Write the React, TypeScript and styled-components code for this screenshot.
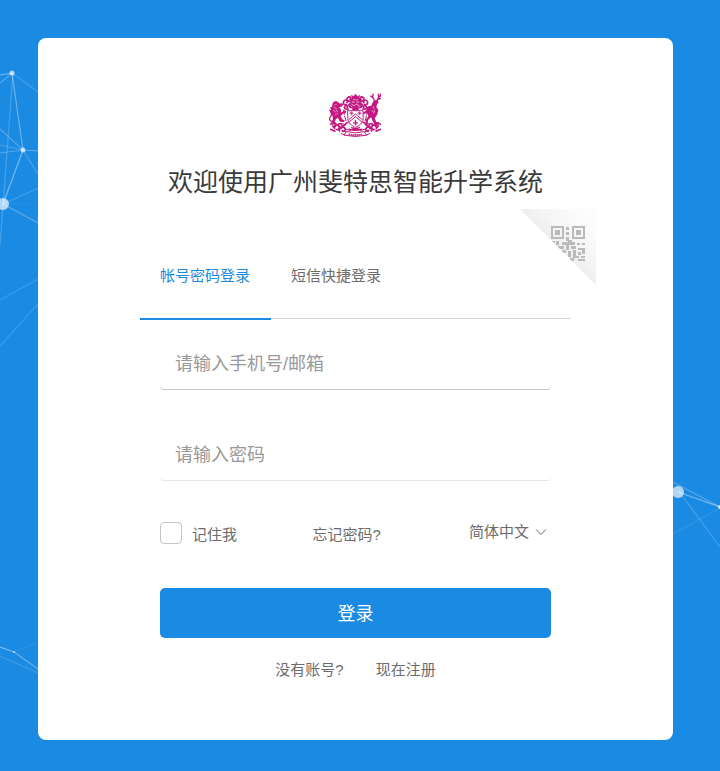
import React, { useState } from "react";
import styled, { createGlobalStyle } from "styled-components";

const BLUE = "#1a8ae3";
const CREST = "#c2187f";

const GlobalStyle = createGlobalStyle`
  *, *::before, *::after { box-sizing: border-box; }
  body {
    margin: 0;
    background: ${BLUE};
    color: #6c6c6c;
    font-family: "Liberation Sans", "Noto Sans CJK SC", sans-serif;
    font-size: 15px;
  }
  button, input, select { font: inherit; color: inherit; }
`;

const Page = styled.div`
  position: relative;
  min-height: 100vh;
  padding: 38px 47px 31px 38px;
  overflow: hidden;
`;

const Network = styled.svg<{ $side: "left" | "right" }>`
  position: absolute;
  top: 0;
  ${(p) => p.$side}: 0;
  stroke: #fff;
  stroke-width: 1.2;
  fill: none;
`;

const Card = styled.main`
  position: relative;
  display: flex;
  flex-direction: column;
  align-items: center;
  padding: 55px 24px 60px;
  background: #fff;
  border-radius: 8px;
`;

const Title = styled.h1`
  margin: 26px 0 9px;
  color: #3a3a3a;
  font-size: 25px;
  font-weight: 400;
  line-height: 36px;
`;

const Panel = styled.form`
  position: relative;
  width: 100%;
  max-width: 481px;
  padding: 24px 25px 0;
`;

const QrToggle = styled.button`
  position: absolute;
  top: 0;
  right: 0;
  display: flex;
  padding: 0;
  border: 0;
  background: none;
  cursor: pointer;
`;

const Tabs = styled.div`
  display: flex;
  height: 86px;
  border-bottom: 1px solid #d8d8d8;
`;

const Tab = styled.button<{ $active: boolean }>`
  height: 87px;
  padding: 0 21px 2px 20px;
  border: 0;
  border-bottom: 2px solid ${(p) => (p.$active ? BLUE : "transparent")};
  background: none;
  color: ${(p) => (p.$active ? BLUE : "#6c6c6c")};
  cursor: pointer;
`;

const Body = styled.div`
  display: flex;
  flex-direction: column;
  padding: 21px 20px 0;
`;

const Fields = styled.div`
  display: grid;
  gap: 41px;
`;

const Field = styled.input<{ $line: string }>`
  width: 100%;
  height: 50px;
  padding: 0 15px;
  border: 0;
  border-bottom: 1px solid ${(p) => p.$line};
  border-radius: 4px;
  outline: 0;
  background: #fff;
  font-size: 18px;
  &::placeholder { color: #999; opacity: 1; }
`;

const Options = styled.div`
  display: flex;
  align-items: center;
  height: 26px;
  margin: 39px 0 42px;
`;

const Remember = styled.label`
  display: flex;
  align-items: center;
  gap: 10px;
  width: 39%;
`;

const Checkbox = styled.input`
  appearance: none;
  width: 22px;
  height: 22px;
  margin: 0;
  border: 1px solid #c4c4c4;
  border-radius: 4px;
  background: #fff;
  &:checked { background: ${BLUE}; border-color: ${BLUE}; }
`;

const TextLink = styled.a`
  color: inherit;
  text-decoration: none;
`;

const Language = styled.label`
  display: flex;
  align-items: center;
  gap: 5px;
  margin-left: auto;
  padding: 0 4px 3px 0;
`;

const LanguageSelect = styled.select`
  appearance: none;
  padding: 0;
  border: 0;
  outline: 0;
  background: none;
`;

const Submit = styled.button`
  height: 50px;
  padding: 0 0 2px;
  border: 0;
  border-radius: 5px;
  background: ${BLUE};
  color: #fff;
  font-size: 18px;
  cursor: pointer;
`;

const Register = styled.p`
  display: flex;
  justify-content: center;
  gap: 32px;
  margin: 22px 0 0;
  line-height: 20px;
`;

type Line = [number, number, number, number, number];
type Dot = [number, number, number, number];

const leftLines: Line[] = [
  [12, 73, 0, 75, 0.4], [12, 73, 0, 83, 0.25], [12, 73, 38, 92, 0.18],
  [12, 73, 23, 150, 0.35], [13, 73, 0, 245, 0.2], [23, 150, 0, 129, 0.25],
  [23, 150, 0, 145, 0.2], [23, 150, 0, 153, 0.25], [23, 150, 38, 151, 0.3],
  [23, 150, 38, 174, 0.2], [23, 150, 3, 204, 0.4], [3, 204, 38, 188, 0.18],
  [3, 204, 38, 203, 0.05], [3, 204, 38, 223, 0.28], [0, 300, 38, 279, 0.14],
  [0, 346, 38, 304, 0.14], [0, 647, 14, 652, 0.4], [14, 652, 38, 669, 0.35],
  [14, 652, 38, 642, 0.08], [0, 656, 38, 673, 0.14],
];
const leftDots: Dot[] = [[12, 73, 2.5, 0.65], [23, 150, 2.5, 0.65], [3, 204, 6, 0.65], [14, 652, 1, 0.6]];

const rightLines: Line[] = [
  [0, 482, 47, 507, 0.25], [5, 492, 47, 507, 0.4],
  [5, 490, 47, 547, 0.18], [0, 534, 47, 508, 0.1],
];
const rightDots: Dot[] = [[5, 492, 6, 0.65], [47, 507, 2, 0.75]];

function Constellation({ side, width, lines, dots }: { side: "left" | "right"; width: number; lines: Line[]; dots: Dot[] }) {
  return (
    <Network $side={side} width={width} height="771" aria-hidden="true">
      {lines.map(([x1, y1, x2, y2, o], i) => (
        <line key={i} x1={x1} y1={y1} x2={x2} y2={y2} strokeOpacity={o} />
      ))}
      {dots.map(([cx, cy, r, o], i) => (
        <circle key={i} cx={cx} cy={cy} r={r} fill="#fff" fillOpacity={o} stroke="none" />
      ))}
    </Network>
  );
}

function Beast() {
  return (
    <g>
      <path d="M36 55c4-7 15-7 19 0l6 3-1 7-6 1c7 5 9 12 7 18l8-5 8 1-2 6-8 1-7 8 5 9 7 3-1 5-13-1-6-11-6 3-4 10 6 3-1 4H32l1-8 4-8-2-12-5-7-3-8 5-2-4-7 6-2z" fill={CREST} stroke="none" />
      <path d="M42 61l5-2M40 68l7 3M38 77l7 5M46 74l5 8M44 90l6-3" stroke="#fff" strokeWidth="1.5" />
      <path d="M34 110c-9-2-9-9-4-15s4-10-2-18M53 66l9-2 4-5M59 60l4-3" strokeWidth="4" />
    </g>
  );
}

function Scroll() {
  return (
    <g>
      <path d="M30 119c8-8 18-3 15 5-2 6-9 4-8 0M42 132c-4-6 3-13 10-9 8 4 3 14-4 12M51 121c8-8 15-2 13 4-2 5-8 4-7 0M57 139c-3-9 10-15 16-8 4 6-3 12-8 8M67 126l13-13M30 134l13 6" strokeWidth="5" />
      <path d="M65 137l20 9M72 132l18 6M36 122l6 8M56 127l8 6M66 117l8 4M62 147l12 5" strokeWidth="3" />
    </g>
  );
}

function Crest() {
  return (
    <svg width="53" height="45" viewBox="25 25 160 135" fill="none" stroke={CREST} strokeLinecap="round" role="img" aria-label="校徽">
      <Beast />
      <Scroll />
      <g transform="matrix(-1 0 0 1 210 0)"><Scroll /></g>
      <path d="M140 66l13-4 5-12 8-4 7 2 2 6-5 4-2 9 6 9-3 13-8 12 5 12 7 4-1 5h-10l-8-14-4-10-9 8-1 12-7 2 1-15 8-10-4-10-13 4-2-5 12-5z" fill={CREST} stroke="none" />
      <path d="M162 47l-5-11 1-8M158 39l-7-5M169 48l6-9-1-11M173 39l7-5v-6M174 44l6-3" strokeWidth="4" />
      <path d="M158 65l3 7M154 78l6 4M163 76l-3 9" stroke="#fff" strokeWidth="1.5" />
      <path d="M82 78h46v25c0 13-13 20-23 26-10-6-23-13-23-26z" fill="#fff" strokeWidth="3" />
      <path d="M85 105l20-17 20 17M86 112l19-16 19 16" strokeWidth="3" />
      <path d="M93 81v10M88 86h10M90 83l6 6M96 83l-6 6M117 81v10M112 86h10M114 83l6 6M120 83l-6 6" strokeWidth="2" />
      <path d="M105 107v14M99 115h12" strokeWidth="4" />
      <path d="M95 70c-10 1-13-6-11-12l6-3c-4-9 1-17 10-16h11c9-1 14 7 10 16l6 3c2 7-2 13-12 12l-2 6H97z" fill={CREST} strokeWidth="2" />
      <path d="M95 52h6M108 52h7M94 59l7 4 6-5 8 4M99 45h4M107 45h5M91 63l4 4M118 63l-4 4" stroke="#fff" strokeWidth="2" />
      <path d="M96 40l-4-8 8 3 5-7 6 7 7-3-4 9z" fill={CREST} strokeWidth="2" />
      <path d="M83 73c-11 2-14-4-9-9 4-4 9 1 6 4M78 60c-10 1-13-8-6-13 6-4 12 4 7 7M86 50c-8-2-9-10-2-13 6-2 9 4 4 7M127 73c11 2 14-4 9-9-4-4-9 1-6 4M132 60c10 1 13-8 6-13-6-4-12 4-7 7M124 50c8-2 9-10 2-13-6-2-9 4-4 7" strokeWidth="5" />
      <path d="M76 81l-7-5 2 13M134 81l7-5-2 13M72 94l4 14M138 94l-4 14" strokeWidth="3" />
      <path d="M79 141q26 8 52 0l7 11q-33 8-66 0z" fill="#fff" strokeWidth="3" />
      <path d="M84 149q21 5 42 0" strokeWidth="6" strokeDasharray="4 2" strokeLinecap="butt" />
      <path d="M86 134q19 6 38 0M93 129l24 6M117 129l-24 6" strokeWidth="4" />
    </svg>
  );
}

function QrCorner() {
  return (
    <svg width="76" height="76" viewBox="0 0 76 76" aria-hidden="true">
      <defs>
        <linearGradient id="fold" gradientUnits="userSpaceOnUse" x1="20" y1="50" x2="62" y2="8">
          <stop offset="0.25" stopColor="#ebebeb" />
          <stop offset="0.6" stopColor="#f5f5f5" />
          <stop offset="1" stopColor="#fcfcfc" />
        </linearGradient>
        <clipPath id="corner"><path d="M0 0h76v76z" /></clipPath>
      </defs>
      <path d="M0 0h76v76z" fill="url(#fold)" />
      <g clipPath="url(#corner)" fill="#bababa">
        <path d="M32 18h11v11H32zM53 18h11v11H53z" fill="none" stroke="#bababa" strokeWidth="2" />
        <path d="M35 21h5v5h-5zM56 21h5v5h-5zM46 18h3v3h-3zM46 23h3v3h-3zM46 28h3v4h-3zM30 32h5v2h-5zM36 32h3v4h-3zM42 33h13v3H42zM48 31h4v4h-4zM57 34h3v2h-3zM62 34h3v2h-3zM38 37h6v3h-6zM46 36h3v5h-3zM51 37h5v3h-5zM42 41h4v3h-4zM48 42h3v6h-3zM53 41h3v8h-3zM58 39h7v2h-7zM62 41h3v4h-3zM58 43h3v3h-3zM56 47h3v2h-3zM61 47h4v2h-4zM58 50h7v2h-7zM49 49h5v3h-5z" />
      </g>
    </svg>
  );
}

export default function App() {
  const [tab, setTab] = useState(0);
  return (
    <>
      <GlobalStyle />
      <Page>
        <Constellation side="left" width={38} lines={leftLines} dots={leftDots} />
        <Constellation side="right" width={47} lines={rightLines} dots={rightDots} />
        <Card>
          <Crest />
          <Title>欢迎使用广州斐特思智能升学系统</Title>
          <Panel onSubmit={(e) => e.preventDefault()}>
            <QrToggle type="button" aria-label="扫码登录"><QrCorner /></QrToggle>
            <Tabs role="tablist">
              {["帐号密码登录", "短信快捷登录"].map((name, i) => (
                <Tab key={name} type="button" role="tab" aria-selected={tab === i} $active={tab === i} onClick={() => setTab(i)}>
                  {name}
                </Tab>
              ))}
            </Tabs>
            <Body>
              <Fields>
                <Field $line="#c6c6c6" type="text" placeholder="请输入手机号/邮箱" aria-label="手机号/邮箱" />
                <Field $line="#e6e6e6" type="password" placeholder="请输入密码" aria-label="密码" />
              </Fields>
              <Options>
                <Remember><Checkbox type="checkbox" />记住我</Remember>
                <TextLink href="#forgot">忘记密码?</TextLink>
                <Language>
                  <LanguageSelect aria-label="语言" defaultValue="zh">
                    <option value="zh">简体中文</option>
                  </LanguageSelect>
                  <svg width="12" height="8" viewBox="0 0 12 8" fill="none" stroke="#666" aria-hidden="true">
                    <path d="M1 1.5l5 5 5-5" />
                  </svg>
                </Language>
              </Options>
              <Submit type="submit">登录</Submit>
              <Register>
                <span>没有账号?</span>
                <TextLink href="#register">现在注册</TextLink>
              </Register>
            </Body>
          </Panel>
        </Card>
      </Page>
    </>
  );
}
